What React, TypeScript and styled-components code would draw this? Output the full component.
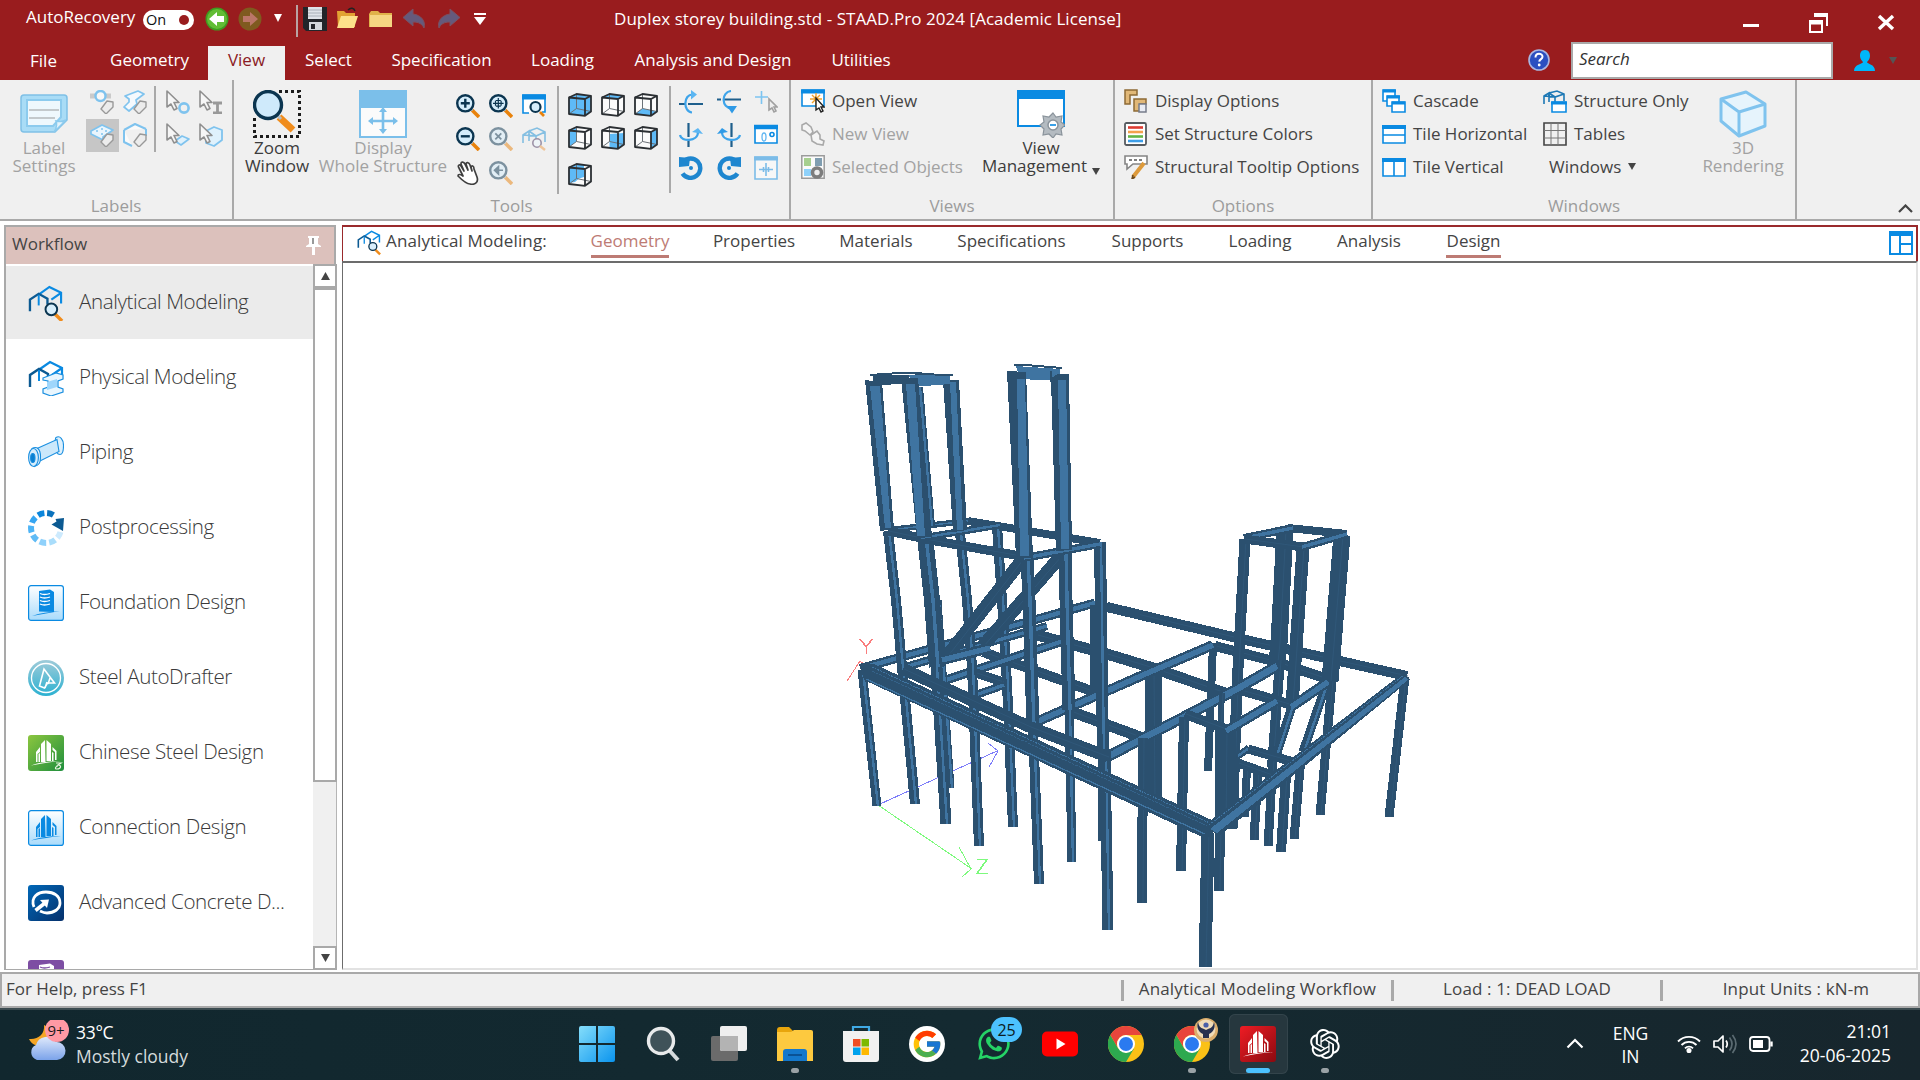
import React from "react";
import styled, { createGlobalStyle, css } from "styled-components";
import { FcGoogle } from "react-icons/fc";
import { FaWhatsapp } from "react-icons/fa";
import { RiOpenaiFill } from "react-icons/ri";

const Global = createGlobalStyle`
  * { box-sizing: border-box; }
  body { margin: 0; background: #fff; overflow: hidden; }
`;

const RED = "#991c1e";
const LINE = "#a9a9a9";
const BLUE = "#0a8ae2";
const NAVY = "#0b3550";

const Screen = styled.div`
  width: 1920px;
  height: 1080px;
  display: flex;
  flex-direction: column;
  overflow: hidden;
  background: #fff;
  color: #444;
  font: 400 17px/18px "Open Sans", "Noto Sans", sans-serif;
  letter-spacing: -0.01px;
  white-space: nowrap;
`;

const Svg = styled.svg<{ $w?: number; $h?: number; $dim?: boolean }>`
  display: block;
  flex: none;
  width: ${(p) => p.$w ?? 24}px;
  height: ${(p) => p.$h ?? p.$w ?? 24}px;
  opacity: ${(p) => (p.$dim ? 0.5 : 1)};
`;

/* ---------- title bar ---------- */
const TitleBar = styled.header`
  height: 46px;
  flex: none;
  display: flex;
  align-items: flex-start;
  background: ${RED};
  color: #fff;
  padding-left: 26px;
`;
const TitleText = styled.span<{ $w: number; $ls?: number; $mt?: number }>`
  width: ${(p) => p.$w}px;
  flex: none;
  margin-top: ${(p) => p.$mt ?? 8}px;
  letter-spacing: ${(p) => p.$ls ?? 0}px;
`;
const Toggle = styled.span`
  width: 51px;
  height: 20px;
  flex: none;
  margin: 10px 11px 0 8px;
  padding: 0 5px 0 3px;
  border-radius: 10px;
  background: #fff;
  color: #111;
  display: flex;
  align-items: center;
  justify-content: space-between;
  font-size: 14.5px;
  &::after {
    content: "";
    width: 10px;
    height: 10px;
    border-radius: 50%;
    background: ${RED};
  }
`;
const QuickAccess = styled.div`
  display: flex;
  flex: none;
  width: 409px;
  padding-top: 7px;
`;
const Slot = styled.span<{ $w: number }>`
  width: ${(p) => p.$w}px;
  flex: none;
`;
const QuickDivider = styled.span`
  width: 2px;
  height: 32px;
  margin: -2px 5px 0 0;
  background: #b9a3a3;
`;
const WindowButtons = styled.div`
  margin-left: auto;
  padding: 11px 25px 0 0;
  display: flex;
  gap: 49px;
`;

/* ---------- menu row ---------- */
const MenuRow = styled.nav`
  height: 34px;
  flex: none;
  display: flex;
  background: ${RED};
  color: #fff;
`;
const MenuTab = styled.span<{ $w: number; $active?: boolean; $drop?: number; $pr?: number }>`
  width: ${(p) => p.$w}px;
  text-align: center;
  padding-top: ${(p) => 5 + (p.$drop ?? 0)}px;
  padding-right: ${(p) => p.$pr ?? 0}px;
  ${(p) => p.$active && css`background: #f0f0f0; color: #8a1a24;`}
`;
const MenuRight = styled.div`
  margin-left: auto;
  display: flex;
  align-items: flex-start;
  padding-right: 23px;
`;
const SearchBox = styled.div`
  width: 262px;
  height: 37px;
  margin: -4px 21px 0 21px;
  padding: 6px 6px;
  border: 2px solid ${LINE};
  background: #fff;
  color: #333;
  font-style: italic;
`;
const Down = styled.span<{ $size?: number; $color?: string; $mt?: number; $ml?: number }>`
  display: block;
  width: 0;
  flex: none;
  border: ${(p) => (p.$size ?? 8) / 2}px solid transparent;
  border-top: ${(p) => (p.$size ?? 8) - 1}px solid ${(p) => p.$color ?? "#444"};
  border-bottom: 0;
  margin-top: ${(p) => p.$mt ?? 0}px;
  margin-left: ${(p) => p.$ml ?? 0}px;
`;

/* ---------- ribbon ---------- */
const Ribbon = styled.section`
  height: 141px;
  flex: none;
  display: flex;
  background: #f0f0f0;
  border-bottom: 2px solid ${LINE};
`;
const Group = styled.div<{ $w: number }>`
  width: ${(p) => p.$w}px;
  height: 139px;
  flex: none;
  border-right: 2px solid ${LINE};
  display: flex;
  flex-direction: column;
`;
const GroupBody = styled.div`
  height: 117px;
  display: flex;
  align-items: flex-start;
`;
const GroupName = styled.div`
  text-align: center;
  color: #9c9c9c;
`;
const BigButton = styled.div<{ $w: number; $off?: boolean; $pl?: number }>`
  width: ${(p) => p.$w}px;
  flex: none;
  padding: 10px 0 0 ${(p) => p.$pl ?? 0}px;
  display: flex;
  flex-direction: column;
  align-items: center;
  text-align: center;
  color: ${(p) => (p.$off ? "#a2a2a2" : "#3c3c3c")};
  & > svg { margin-bottom: 1px; }
`;
const WithArrow = styled.span`
  display: flex;
  gap: 5px;
`;
const IconGrid = styled.div<{ $cell?: number; $cols: number; $rows: string; $pt: number; $ml?: number }>`
  display: grid;
  grid-template-columns: repeat(${(p) => p.$cols}, ${(p) => p.$cell ?? 33}px);
  grid-template-rows: ${(p) => p.$rows};
  padding-top: ${(p) => p.$pt}px;
  margin-left: ${(p) => p.$ml ?? 0}px;
`;
const IconCell = styled.span<{ $on?: boolean }>`
  height: 33px;
  display: flex;
  align-items: flex-start;
  padding: 4px 0 0 4px;
  background: ${(p) => (p.$on ? "#c6c6c6" : "transparent")};
`;
const InnerLine = styled.span<{ $h: number; $ml: number; $mr: number }>`
  width: 2px;
  flex: none;
  height: ${(p) => p.$h}px;
  margin: 6px ${(p) => p.$mr}px 0 ${(p) => p.$ml}px;
  background: ${LINE};
`;
const CommandList = styled.div<{ $w: number; $pl: number }>`
  width: ${(p) => p.$w}px;
  flex: none;
  padding: 4px 0 0 ${(p) => p.$pl}px;
`;
const Command = styled.div<{ $off?: boolean; $bare?: boolean }>`
  height: 33px;
  display: flex;
  align-items: center;
  gap: 7px;
  padding-left: ${(p) => (p.$bare ? 6 : 0)}px;
  color: ${(p) => (p.$off ? "#a2a2a2" : "#444")};
`;
const Collapse = styled.div`
  flex: 1;
  display: flex;
  align-items: flex-end;
  justify-content: flex-end;
  padding: 0 7px 6px 0;
`;

/* ---------- workspace ---------- */
const Workspace = styled.main`
  height: 751px;
  flex: none;
  display: flex;
  padding: 4px 2px 2px 4px;
`;
const Panel = styled.aside`
  width: 333px;
  height: 745px;
  flex: none;
  display: flex;
  flex-direction: column;
`;
const PanelHead = styled.div`
  width: 332px;
  height: 39px;
  flex: none;
  border: 2px solid ${LINE};
  border-bottom: 0;
  background: #dcc1bc;
  display: flex;
  justify-content: space-between;
  padding: 8px 13px 0 6px;
`;
const PanelBody = styled.div`
  flex: 1;
  min-height: 0;
  display: flex;
  border-left: 2px solid ${LINE};
  border-bottom: 1px solid ${LINE};
`;
const FlowList = styled.div`
  width: 307px;
  padding-top: 2px;
  overflow: hidden;
`;
const FlowItem = styled.div<{ $on?: boolean }>`
  height: 73px;
  margin-bottom: 2px;
  padding-left: 22px;
  display: flex;
  align-items: center;
  gap: 15px;
  background: ${(p) => (p.$on ? "#ebebeb" : "transparent")};
`;
const FlowName = styled.span`
  padding-bottom: 4px;
  font-size: 20.6px;
  font-weight: 300;
  line-height: 28px;
  letter-spacing: -0.42px;
  color: #3a3a3a;
`;
const Scroll = styled.div`
  width: 24px;
  display: flex;
  flex-direction: column;
  background: #f0f0f0;
  border-right: 1px solid #b5b5b5;
`;
const ScrollEnd = styled.div<{ $last?: boolean }>`
  width: 24px;
  height: 24px;
  flex: none;
  margin-bottom: ${(p) => (p.$last ? -1 : 0)}px;
  border: 2px solid ${LINE};
  background: #fff;
  display: flex;
  align-items: center;
  justify-content: center;
`;
const Thumb = styled.div`
  width: 24px;
  height: 494px;
  border: 2px solid ${LINE};
  background: #fff;
  margin-bottom: auto;
`;
const View = styled.section`
  width: 1576px;
  margin-left: 5px;
  display: flex;
  flex-direction: column;
`;
const ViewTabs = styled.div`
  height: 36px;
  flex: none;
  border: 2px solid #9a2a2c;
  border-left-width: 1px;
  border-bottom: 0;
  display: flex;
  align-items: flex-start;
  padding-left: 14px;
`;
const ViewTitle = styled.span`
  width: 205px;
  padding-top: 5px;
  margin-left: 5px;
  letter-spacing: 0.13px;
`;
const ViewTab = styled.span<{ $w: number; $gap: number; $on?: boolean; $line?: boolean }>`
  width: ${(p) => p.$w}px;
  margin-right: ${(p) => p.$gap}px;
  height: 31px;
  padding-top: 5px;
  display: flex;
  justify-content: center;
  flex: none;
  color: ${(p) => (p.$on ? "#bd7b74" : "#444")};
  border-bottom: 3px solid ${(p) => (p.$line ? "#bd7b74" : "transparent")};
`;
const LayoutIcon = styled.span`
  margin: 4px 3px 0 auto;
`;
const Stage = styled.div`
  flex: 1;
  border: 2px solid #e2e2e2;
  border-top: 2px solid #6c6c6c;
  border-left: 1px solid #6c6c6c;
  background: #fff;
  overflow: hidden;
`;

/* ---------- status bar ---------- */
const Status = styled.footer`
  height: 36px;
  flex: none;
  border: 2px solid ${LINE};
  background: #f0f0f0;
  display: flex;
  align-items: flex-start;
  padding: 6px 0 0 4px;
`;
const StatusText = styled.span<{ $w: number }>`
  width: ${(p) => p.$w}px;
  flex: none;
  text-align: center;
  letter-spacing: 0.14px;
`;
const StatusHelp = styled.span`
  width: 1115px;
  flex: none;
`;
const StatusLine = styled.i`
  width: 3px;
  height: 21px;
  flex: none;
  background: ${LINE};
`;

/* ---------- taskbar ---------- */
const Taskbar = styled.footer`
  height: 72px;
  flex: none;
  border-top: 2px solid #3b4b50;
  background: linear-gradient(90deg, #11272e, #142a31 50%, #17262d);
  display: flex;
  color: #fff;
  font-size: 17.5px;
`;
const Weather = styled.div`
  width: 567px;
  flex: none;
  display: flex;
  padding: 10px 0 0 27px;
`;
const WeatherText = styled.div`
  line-height: 24px;
  margin-left: 7px;
  color: #d5dbdc;
  & > b { display: block; font-weight: 400; color: #fff; letter-spacing: -0.3px; }
`;
const Apps = styled.div`
  display: flex;
  flex: none;
  padding-top: 4px;
`;
const TaskApp = styled.div<{ $on?: boolean }>`
  position: relative;
  width: 59px;
  height: 60px;
  margin-right: 7.2px;
  border-radius: 6px;
  display: flex;
  justify-content: center;
  padding-top: 12px;
  ${(p) => p.$on && css`background: #26373e; box-shadow: inset 0 0 0 1px #33444b;`}
  & > svg { width: 36px; height: 36px; }
`;
const Dot = styled.i<{ $on?: boolean }>`
  position: absolute;
  bottom: 1px;
  width: ${(p) => (p.$on ? 24 : 8)}px;
  height: 5px;
  border-radius: 3px;
  background: ${(p) => (p.$on ? "#4cc2ff" : "#9aa2a6")};
`;
const Badge = styled.span`
  position: absolute;
  top: 3px;
  left: 27px;
  width: 31px;
  height: 25px;
  border-radius: 13px;
  background: #4cc2ff;
  color: #0d1c22;
  font-size: 16px;
  line-height: 26px;
  text-align: center;
`;
const White = styled.span`
  width: 36px;
  height: 36px;
  border-radius: 50%;
  background: #fff;
  display: flex;
  align-items: center;
  justify-content: center;
  & > svg { width: 32px; height: 32px; }
`;
const Avatar = styled.span`
  position: absolute;
  top: 4px;
  left: 31px;
`;
const Tray = styled.div`
  margin-left: auto;
  display: flex;
  padding-right: 29px;
`;
const TrayText = styled.div<{ $w: number; $right?: boolean; $pt: number; $lh: number }>`
  width: ${(p) => p.$w}px;
  padding-top: ${(p) => p.$pt}px;
  text-align: ${(p) => (p.$right ? "right" : "center")};
  line-height: ${(p) => p.$lh}px;
`;
const TrayIcons = styled.div`
  display: flex;
  gap: 12px;
  padding-top: 22px;
  width: 108px;
`;

/* ---------- icons ---------- */
type Lens = { sign?: "plus" | "minus" | "cross" | "move" | "left"; dim?: boolean };
const Magnifier = ({ sign, dim }: Lens) => (
  <Svg viewBox="0 0 24 24" $dim={dim} fill="none">
    <path d="M16 16l7 7" stroke="#e8820c" strokeWidth="3.6" />
    <path d="M14.5 14.5l2 2" stroke="#b9c4cc" strokeWidth="2.4" />
    <circle cx="9.3" cy="9.3" r="8.1" fill="#d5edfb" stroke={NAVY} strokeWidth="2.4" />
    <g stroke={NAVY} strokeWidth="2.4">
      {sign === "plus" && <path d="M4.8 9.3h9M9.3 4.8v9" />}
      {sign === "minus" && <path d="M4.8 9.3h9" />}
      {sign === "cross" && <path d="M6.3 6.3l6 6M12.3 6.3l-6 6" strokeWidth="1.8" />}
      {sign === "left" && <path d="M14 9.3H9M9.500 5.500L5.500 9.300l4 3.800z" fill={NAVY} strokeWidth="1.6" />}
      {sign === "move" && <path d="M4 9.3h10.6M9.3 4v10.6M6.5 6.8v5M12.1 6.8v5M6.8 6.5h5M6.8 12.1h5" strokeWidth="1.2" />}
    </g>
  </Svg>
);

const P = {
  tlf: [1, 4.5], trf: [17, 6], blf: [1, 21], brf: [17, 22.8],
  tlb: [8.5, 1], trb: [23, 2.8], blb: [8.5, 15.5], brb: [23, 18.5],
} as const;
type V = keyof typeof P;
const poly = (vs: V[]) => vs.map((v) => P[v].join(",")).join(" ");
const cubeFaces: V[][][] = [
  [["tlf", "tlb", "trb", "brb", "brf", "blf"]],
  [["tlf", "tlb", "trb", "trf"]],
  [["blf", "blb", "brb", "brf"]],
  [["tlf", "tlb", "blb", "blf"]],
  [],
  [["trf", "trb", "brb", "brf"]],
  [],
];
const Cube = ({ index }: { index: number }) => (
  <Svg viewBox="0 0 24 24" fill="none" strokeLinejoin="round">
    <polygon points={poly(["tlf", "tlb", "trb", "brb", "brf", "blf"])} fill="#fbfbfb" />
    {cubeFaces[index].map((f, i) => <polygon key={i} points={poly(f)} fill="#5ebaf7" />)}
    {index === 4 && <polygon points="8.500,8 23,7 23,18.500 17,22.800 8.500,21.800" fill="#5ebaf7" />}
    {index === 6 && <polygon points="1,4.500 8.500,1 16,2 16,14 11,15.500 7,19 1,20" fill="#5ebaf7" />}
    <path d="M8.500 1V15.500L23 18.500M8.500 15.500L1 21" stroke="#6b7177" strokeWidth="1" />
    <path d="M1 4.500L17 6V22.800L1 21zM1 4.500L8.500 1 23 2.800 17 6M23 2.800V18.500L17 22.800" stroke="#2b2f33" strokeWidth="1.8" />
  </Svg>
);

const Tag = () => <path d="M11 19l6-8 6 1v5l-7 7z" fill="#ececec" stroke="#999" strokeWidth="1.4" />;
type Part = "node" | "beam" | "plate" | "solid";
const LabelIcon = ({ kind }: { kind: Part }) => (
  <Svg viewBox="0 0 24 24" fill="none" stroke="#7fc3ee" strokeWidth="1.7" strokeLinejoin="round">
    {kind === "node" && <><path d="M0 6h21" stroke="#cacaca" strokeWidth="5" /><circle cx="10.5" cy="6" r="5" fill="#f8f8f8" strokeWidth="2.4" /></>}
    {kind === "beam" && <path d="M2 6L15 1l6 3-8 6 1 4-8 7-5-4 5-5V9z" fill="#f4f9fd" />}
    {kind === "plate" && <><path d="M1 8L12 2l11 5-10 7v3L1 11z" fill="#e9f5fd" /><path d="M6 8h2M11 6h2M15 8h2M11 11h2" /></>}
    {kind === "solid" && <path d="M1 7L12 1l11 5M1 7v12l8 4M23 6v7" fill="#fafafa" strokeWidth="2" />}
    <Tag />
  </Svg>
);
const Pointer = ({ kind }: { kind: Part }) => (
  <Svg viewBox="0 0 24 24" fill="none" strokeLinejoin="round">
    {kind === "node" && <circle cx="18" cy="18" r="4.6" stroke="#7fc3ee" strokeWidth="2.6" />}
    {kind === "beam" && <path d="M14 13h9M14 23h9M18.500 13v10" stroke="#999" strokeWidth="2.8" />}
    {kind === "plate" && <path d="M9 18l7-5 7 3-8 6z" stroke="#7fc3ee" fill="#dff1fc" strokeWidth="1.6" />}
    {kind === "solid" && <path d="M7 8l8-4 8 3v10l-8 6-8-3z" stroke="#7fc3ee" fill="#dff1fc" strokeWidth="1.8" />}
    <path d="M1 1v16l4-3 3 6 3-1.500-3-6h5z" fill="#f6f6f6" stroke="#8f8f8f" strokeWidth="1.6" />
  </Svg>
);

const Spin = ({ kind }: { kind: number }) => (
  <Svg viewBox="0 0 24 24" fill="none" stroke="#3ea4ea" strokeWidth="2.2">
    {kind === 0 && <><path d="M0 14h6M9 14h15" stroke="#1f5f8c" /><path d="M14 4.500C4 4 4 22 13 22.500" /><path d="M12 0l6 4.500-6 5z" fill="#5cb6f2" stroke="none" /></>}
    {kind === 1 && <><path d="M0 9.500h4M7 9.500h17" stroke="#1f5f8c" /><path d="M14 1C4 2 4 18 15 18.500" /><path d="M10 16h10l-5 7.500z" fill="#2f9ae6" stroke="none" /></>}
    {kind === 2 && <><path d="M9.500 0v14M9.500 18v6" stroke="#1f5f8c" /><path d="M1 12c1 7 18 7 18-3" /><path d="M13 9l6-4 5 6z" fill="#5cb6f2" stroke="none" /></>}
    {kind === 3 && <><path d="M14.500 0v14M14.500 18v6" stroke="#1f5f8c" /><path d="M23 12c-1 7-18 7-18-3" /><path d="M11 9L5 5 0 11z" fill="#2f9ae6" stroke="none" /></>}
    {(kind === 4 || kind === 5) && (
      <g transform={kind === 5 ? "matrix(-1 0 0 1 24 0)" : undefined}>
        <path d="M4.500 5.500a9.700 9.700 0 1 1-1 12" stroke="#1e86cf" strokeWidth="4.4" />
        <path d="M0 1l11 1-1 8-10 1z" fill="#1e86cf" stroke="none" />
        <circle cx="12" cy="12" r="2" fill="#1e86cf" stroke="none" />
      </g>
    )}
  </Svg>
);

const Win = ({ kind }: { kind: string }) => (
  <Svg viewBox="0 0 24 24" fill="none" stroke={BLUE} strokeWidth="1.6">
    {kind === "cascade" && <g fill="#fff"><path d="M1 1h12v11H1z" /><path d="M1 2h13" strokeWidth="3" /><path d="M5 7h12v10H5z" /><path d="M5 8h13" strokeWidth="3" /><path d="M10 13h13v10H10z" /><path d="M10 14h13" strokeWidth="3" /></g>}
    {kind === "horiz" && <><path d="M1 4h22v17H1zM1 13h22" fill="#fff" /><path d="M0 5h24" strokeWidth="4" /></>}
    {kind === "vert" && <><path d="M1 4h22v17H1zM12 4v17" fill="#fff" /><path d="M0 5h24" strokeWidth="4" /></>}
    {kind === "structure" && <><path d="M1 15V7l5-3v9M6 4l8-2 7 3v7M6 4l6 4 9-3M12 8v5M1 7l11 1" stroke="#1d78b5" /><path d="M9 13h14v10H9z" fill="#fff" /><path d="M8 14h16" strokeWidth="3" /></>}
    {kind === "tables" && <><path d="M1 1h22v22H1z" stroke="#444" /><path d="M1 8.500h22M1 16h22M8 1v22M15 1v22" stroke="#777" strokeWidth="1" /></>}
    {kind === "open" && <><path d="M1 1h22v16H1z" fill="#fff" /><path d="M0 2.500h24" strokeWidth="4" /><path d="M15 4v12M9 10h12M11 6l8 8M19 6l-8 8" stroke="#f0a22c" strokeWidth="1.4" /><path d="M15 9v12l3-2 2 4 2-1-2-4h3z" fill="#fff" stroke="#222" strokeWidth="1.400" /></>}
    {kind === "new" && <g stroke="#a9a9a9" fill="#f5f5f5"><path d="M1 3l4-2 5 4 2 5-3 3-5-4-3-1z" /><path d="M10 13l6-4 3 4v4l4 2-1 4-6-1-5-3z" /></g>}
    {kind === "selected" && <g stroke="none"><path d="M.8.8h22.400v22.400H.8z" fill="#fafafa" stroke="#9b9b9b" strokeWidth="1.500" /><path d="M3 3h7v8H3z" fill="#a6cf8f" /><path d="M14 3h7v8h-7z" fill="#7f9db0" /><path d="M3 14h7v7H3z" fill="#8ed1fa" /><circle cx="16" cy="17.500" r="4.500" stroke="#7d7d7d" strokeWidth="3.600" fill="#eee" /></g>}
    {kind === "display" && <g stroke="#8d6a35" strokeWidth="1.500"><path d="M1 1h12v5H6v9H1z" fill="#e1b878" /><path d="M10 10h12v5h-6v7h-6z" fill="#e1b878" /><path d="M15 15h7v8h-7z" fill="#e9ecf4" stroke="#777c8a" /></g>}
    {kind === "colors" && <g><rect x="1" y="1" width="21" height="22" rx="1.500" fill="#fff" stroke="#565b60" strokeWidth="1.800" /><path d="M4 5.500h15" stroke="#dc3b32" strokeWidth="2.600" /><path d="M4 10h15" stroke="#f3a14c" strokeWidth="2.600" /><path d="M4 14.500h15" stroke="#62b545" strokeWidth="2.600" /><path d="M4 19h15" stroke="#3d9ee8" strokeWidth="2.600" /></g>}
    {kind === "tooltip" && <><path d="M1 1h22v8H9l-6 5V9H1z" fill="#fff" stroke="#858585" /><path d="M5 5h14" stroke="#555" strokeDasharray="3 2" /><path d="M20 8L9 22" stroke="#dd9a3b" strokeWidth="4" /><path d="M9 20l-1 4 3-2" stroke="#6e4a1c" /></>}
    {kind === "zoomwin" && <><path d="M7 19H1V1h22v17h-3" fill="#fff" /><path d="M0 3h24" strokeWidth="5" /><circle cx="13.500" cy="13" r="5" stroke={NAVY} strokeWidth="2.200" fill="#d5edfb" /><path d="M18 18l4 4" stroke="#e8820c" strokeWidth="2.600" /></>}
    {kind === "angle" && <><path d="M1 3h22v17H1z" fill="#fff" /><path d="M0 4h24" strokeWidth="4.500" /><ellipse cx="10" cy="14" rx="2" ry="4" stroke="#62b7f2" strokeWidth="1.300" /><circle cx="18" cy="11.500" r="2" /></>}
    {kind === "pan" && <g opacity=".5"><path d="M1 1h22v22H1z" fill="#fff" /><path d="M0 2.500h24" strokeWidth="4" /><path d="M5 13.500h14M12 7v13M9.500 11v5M14.500 11v5" /></g>}
    {kind === "pick" && <><path d="M1 7h13M7.500 1v13" stroke="#7cc4f1" /><path d="M15 9v11l3-2 2 4 2-1-2-4h3z" fill="#eee" stroke="#a0a0a0" /></>}
    {kind === "frames" && <g opacity=".6"><path d="M1 16V8l6-4v10M7 4l8-3 8 4v10M7 4l7 5 9-4M1 8l13 1v7" stroke="#3d9fd9" /><circle cx="15" cy="16" r="4.200" stroke="#657" fill="#eef7fc" /><path d="M18 19l5 4" stroke="#efa860" strokeWidth="2.500" /></g>}
    {kind === "layout" && <g strokeWidth="2"><path d="M1 1h22v22H1zM11 5v18M11 13h12" fill="#fff" /><path d="M0 3h24" strokeWidth="4" /></g>}
  </Svg>
);

const Hand = () => (
  <Svg viewBox="0 0 24 24" fill="#fff" stroke="#3f3f3f" strokeWidth="1.700" strokeLinejoin="round">
    <path d="M3 7C1 4 4 3 5 5l3 5L5 3c0-3 3-2 4 0l3 6-2-6c0-2 3-2 4 1l2 6-1-4c1-2 3-1 3 2l3 8c2 6-3 8-7 7-4 0-9-5-12-8 0-2 2-2 5 0z" />
  </Svg>
);

const Frame = () => (
  <>
    <path d="M12 9L22 2l12 6v11M34 8L24 15" stroke={BLUE} strokeWidth="2.200" />
    <path d="M2 27V15l9-6 9 5v6" stroke="#0c5a92" strokeWidth="2.400" />
    <path d="M11 10v11" stroke={BLUE} strokeWidth="2" />
  </>
);
const Modeling = ({ w }: { w: number }) => (
  <Svg $w={w} viewBox="0 0 37 37" fill="none">
    <Frame />
    <path d="M28 30l7 7" stroke="#f08c1c" strokeWidth="3.600" />
    <circle cx="24" cy="25" r="6" fill="#d8eefb" stroke={NAVY} strokeWidth="2" />
  </Svg>
);
const Tower = ({ color }: { color: string }) => (
  <g fill={color}>
    <path d="M17 5l-4 4v18h4.500zM18.500 5l4.500 4v17h-4.500z" />
    <path d="M12 12l-4 5v10h1.500v-8L12 17zM24.500 12l4 4v9H27v-8l-2.500-2z" />
    <path d="M10.500 19v8H12v-9zM24 17v9h1.500v-8z" />
    <path d="M3 30.500c10-3.500 19-4.500 30-4.500-10 1-19 2.500-30 4.500z" />
  </g>
);
const FlowIcon = ({ kind }: { kind: string }) => {
  if (kind === "analytical") return <Modeling w={36} />;
  return (
    <Svg $w={36} viewBox="0 0 36 36" fill="none">
      <defs>
        <linearGradient id="pale" x1="0" y1="0" x2="0" y2="1"><stop stopColor="#fff" /><stop offset="1" stopColor="#a9dbfb" /></linearGradient>
        <linearGradient id="green" x1="0" y1="0" x2="1" y2="1"><stop stopColor="#8cc63f" /><stop offset="1" stopColor="#1f8f3d" /></linearGradient>
        <linearGradient id="deep" x1="0" y1="0" x2="1" y2="1"><stop stopColor="#0068b8" /><stop offset="1" stopColor="#06306b" /></linearGradient>
        <linearGradient id="teal" x1="0" y1="0" x2="0" y2="1"><stop stopColor="#9fcbd9" /><stop offset="1" stopColor="#2bb1d1" /></linearGradient>
      </defs>
      {kind === "physical" && <><Frame /><path d="M15 18l13-5 7 2v4l-5 2v6l5 2v3l-12 4-8-3v-4l5-2v-6l-5-1z" fill="#e9f6fe" stroke="#1a8fe0" strokeWidth="1.200" /><path d="M19 22l10-3v8l-10 3z" fill="#9fd6fb" /></>}
      {kind === "piping" && <g stroke="#1a8fe0" strokeWidth="1.100"><path d="M28 2.500c4-2.500 7.500 2 7.500 8s-1 9-3.500 9-5-3-5-9 0-7 1-8z" fill="#ddf0fc" /><path d="M9 13.500l20-9 2 12-19 9.500z" fill="#cbe8fb" /><path d="M4 13.500c5-3 8.500 1 8.500 8s-1.500 8.500-6 10z" fill="#eaf6fe" /><ellipse cx="5.500" cy="22.500" rx="4.900" ry="9" fill="#d6edfc" /><ellipse cx="4.800" cy="23" rx="2.200" ry="4.500" fill="#0b7fd0" /></g>}
      {kind === "post" && <>
        <g strokeWidth="6">
          {["#0b86dc", "#0a72bd"].map((c, i) => <path key={c} d="M14.700 3.400a15 15 0 0 1 6.600 0" transform={`rotate(${i * 36 - 19} 18 18)`} stroke={c} />)}
          {["#cdeafd", "#a9ddfb", "#8fd1fb", "#60bbf5", "#4db4f6", "#35a5f2"].map((c, i) => <path key={i} d="M14.700 3.400a15 15 0 0 1 6.600 0" transform={`rotate(${i * 37 + 118} 18 18)`} stroke={c} />)}
        </g>
        <path d="M23.500 14.500l5-3-1-2.500L36 8l-1 13z" fill="#0c5a92" />
      </>}
      {(kind === "foundation" || kind === "connection") && <rect x=".6" y=".6" width="34.800" height="34.800" rx="2.500" fill="url(#pale)" stroke={BLUE} strokeWidth="1.200" />}
      {kind === "foundation" && <><path d="M11 6l11-1.500L26 7v20l-15-.5zM4 31c8-3 17-4 28-5-9 2-19 3-28 5z" fill={BLUE} /><path d="M12 8.500c4 2 7 1 10 0M12 12c4 2 7 1 10 0M12 15.500c4 2 7 1 10 0M12 19c4 2 7 1 10 0" stroke="#fff" strokeWidth="1.300" /></>}
      {kind === "connection" && <Tower color={BLUE} />}
      {kind === "steel" && <><circle cx="18" cy="18" r="18" fill="url(#teal)" /><circle cx="18" cy="18" r="14.500" stroke="#fff" strokeWidth="1.300" /><path d="M16 9L11.500 26l5 2 3-5 7 0zM17 28l2-6M22 18l-2 6" stroke="#fff" strokeWidth="1.600" /></>}
      {kind === "chinese" && <><rect width="36" height="36" rx="3" fill="url(#green)" /><Tower color="#fff" /><path d="M28 28h5l-3 2c4 0 3 4-1 4-3 0-1-3 1-3" stroke="#e8f5e0" strokeWidth="1.200" /></>}
      {kind === "concrete" && <><rect width="36" height="36" rx="3" fill="url(#deep)" /><path d="M6 22C2 12 10 7 18 7c8 0 14 4 14 11 0 6-6 10-13 10-3 0-5-1-7-2" stroke="#fff" strokeWidth="2.800" /><path d="M7.500 25.500L17 18" stroke="#fff" strokeWidth="3.600" /><path d="M12 15l9-.5-2 8.500z" fill="#fff" /></>}
      {kind === "advanced" && <><rect width="36" height="36" rx="3" fill="#7d4ea3" /><path d="M11 5l11-1.500L26 6v20H11z" fill="#fff" /><path d="M12 7c4 2 7 1 10 0M12 10.500c4 2 7 1 10 0" stroke="#7d4ea3" strokeWidth="1.300" /></>}
    </Svg>
  );
};

/* ---------- structural model ---------- */
const DARK = "#2b506f";
const LIGHT = "#3f74a1";
type Look = "d" | "l" | "c" | "s";
type Member = [Look, number, ...number[]];
// look: d = shaded face, l = lit face, c = column with lit web, s = shaded with fine streaks; then width and points
const members: Member[] = [
  ["s", 10, 1107, 607, 1250, 641, 1407, 676],
  ["l", 9, 862, 668, 1095, 603],
  ["d", 9, 1100, 606, 1140, 615],
  ["d", 8, 968, 521, 1100, 543],
  ["l", 6, 888, 530, 968, 521],
  ["c", 8, 919, 387, 931, 526],
  ["c", 10, 997, 526, 1002, 600, 1007, 684, 1013, 827],
  ["l", 8, 905, 667, 1047, 626],
  ["s", 11, 1037, 635, 1107, 654, 1153, 668, 1225, 693],
  ["s", 10, 983, 652, 1100, 694],
  ["l", 9, 943, 681, 1063, 641],
  ["s", 9, 970, 671, 1003, 682],
  ["l", 8, 973, 696, 1004, 685],
  ["s", 10, 1215, 646, 1277, 662, 1330, 680],
  ["d", 8, 1213, 643, 1208, 771],
  ["s", 17, 1153, 670, 1154, 800],
  ["l", 10, 1036, 722, 1107, 691, 1150, 672, 1213, 645],
  ["s", 11, 1070, 711, 1140, 737],
  ["c", 7, 938, 600, 951, 788],
  ["d", 14, 1097, 605, 1097, 692],
  ["s", 5, 1100, 757, 1101, 841],
  ["s", 9, 1332, 681, 1320, 815],
  ["s", 9, 1405, 677, 1389, 817],
  ["s", 17, 1285, 529, 1279, 643, 1277, 662],
  ["s", 10, 1280, 660, 1272, 767],
  ["s", 17, 1342, 535, 1330, 681],
  ["d", 8, 1288, 528, 1347, 534],
  ["l", 8, 1244, 538, 1293, 528],
  ["s", 11, 1245, 539, 1237, 687, 1232, 829],
  ["s", 13, 1303, 548, 1292, 705],
  ["s", 9, 1244, 539, 1303, 547],
  ["l", 8, 1302, 547, 1347, 534],
  ["c", 9, 1292, 706, 1276, 756],
  ["c", 9, 1327, 682, 1303, 752],
  ["s", 10, 1237, 689, 1292, 705],
  ["l", 11, 1107, 757, 1180, 719, 1237, 689, 1277, 666],
  ["s", 6, 1222, 693, 1220, 735],
  ["s", 21, 1226, 729, 1225, 829],
  ["s", 10, 1220, 826, 1219, 891],
  ["s", 10, 1184, 717, 1181, 871],
  ["s", 10, 1143, 738, 1142, 903],
  ["s", 10, 1185, 714, 1228, 730],
  ["l", 10, 1226, 731, 1277, 701],
  ["l", 10, 1291, 707, 1328, 682],
  ["s", 8, 1247, 765, 1245, 817],
  ["s", 9, 1258, 770, 1254, 840],
  ["s", 9, 1273, 760, 1268, 846],
  ["s", 10, 1286, 775, 1281, 852],
  ["s", 9, 1301, 757, 1294, 839],
  ["l", 7, 1238, 756, 1249, 748],
  ["s", 9, 1248, 749, 1297, 763],
  ["s", 9, 1238, 763, 1280, 778],
  ["c", 10, 888, 531, 896, 600, 902, 667, 915, 804],
  ["c", 16, 925, 537, 932, 600, 937, 667],
  ["c", 11, 936, 667, 946, 824],
  ["c", 10, 960, 533, 967, 600, 972, 667, 979, 846],
  ["s", 13, 1022, 560, 944, 660],
  ["s", 13, 1060, 557, 983, 646],
  ["l", 10, 942, 660, 990, 648],
  ["c", 13, 1027, 557, 1029, 600, 1033, 727],
  ["c", 10, 1033, 727, 1039, 884],
  ["c", 13, 1065, 550, 1066, 600, 1069, 710],
  ["c", 9, 1069, 710, 1072, 862],
  ["c", 12, 1100, 542, 1103, 755],
  ["c", 11, 1105, 750, 1108, 930],
  ["s", 9, 888, 531, 930, 540, 1026, 557],
  ["l", 7, 921, 538, 1000, 525],
  ["l", 8, 1024, 558, 1100, 544],
  ["s", 12, 903, 669, 1030, 727, 1108, 757],
  ["c", 9, 862, 670, 877, 806],
  ["s", 13, 1208, 833, 1205, 968],
];

const shift = (pts: number[], d: number) =>
  pts.map((v, i) => (i % 2 ? v : v + d)).join(" ");

const MemberShape = ({ m }: { m: Member }) => {
  const [look, w, ...pts] = m;
  return (
    <g fill="none" strokeLinejoin="bevel">
      <polyline points={shift(pts, 0)} stroke={DARK} strokeWidth={w} />
      {look === "l" && <polyline points={shift(pts, 0)} stroke={LIGHT} strokeWidth={w - 4.6} />}
      {look === "c" && <polyline points={shift(pts, 1)} stroke={LIGHT} strokeWidth={w > 12 ? 3.4 : 2.4} />}
      {look === "s" && <polyline points={shift(pts, 1)} stroke="#31597b" strokeWidth={0.8} />}
    </g>
  );
};

const Shaft = ({ o, l }: { o: string; l: string }) => (
  <>
    <polygon points={o} fill={DARK} />
    <polygon points={l} fill={LIGHT} />
  </>
);

const Model = () => (
  <Svg $w={1573} $h={704} viewBox="343 263 1573 704" shapeRendering="crispEdges">
    <g fill="none" strokeWidth="1">
      <path d="M880 804L998 750.500M988 743l10 8-9 16M1014 748h5" stroke="#7d7dfa" />
      <path d="M878 805l94 64M959 847l12 22-9 8" stroke="#7dfa7d" />
      <path d="M847 681l13-20 4 3" stroke="#fa7d7d" />
      <path d="M860 639l6.500 8v6.500M872.500 639l-6.500 8" stroke="#fa7d7d" strokeWidth="1.600" />
      <path d="M977 859.500h10l-10 14h10.500" stroke="#7dfa7d" strokeWidth="1.600" />
    </g>
    {members.map((m, i) => <MemberShape key={i} m={m} />)}
    <g fill="none">
      <polygon points="859,664 874,664 1216,822 1212,837 1200,836 864,680" fill={DARK} />
      <polyline points="872,667 1214,825" stroke={LIGHT} strokeWidth="1" strokeDasharray="2 1" />
      <polyline points="872,671 1214,829" stroke="#376690" strokeWidth="0.800" strokeDasharray="3 1" />
      <polyline points="866,679 1205,834" stroke={LIGHT} strokeWidth="1.300" />
      <polygon points="1206,824 1403,673 1410,680 1218,837" fill={DARK} />
      <polygon points="1210,829 1405,677 1408,680 1217,833" fill={LIGHT} />
      <polyline points="1209,825 1404,675" stroke={LIGHT} strokeWidth="1" strokeDasharray="2 1" />
    </g>
    <Shaft o="865,380 882,382 894,529 880,531" l="870,386 880,386 891,528 885,528" />
    <Shaft o="943,380 959,380 967,530 953,532" l="950,382 956,382 963,530 957,530" />
    <polygon points="873,375 909,375 909,384 873,385" fill={DARK} />
    <polygon points="909,375 950,375 950,384 912,387" fill={LIGHT} />
    <path d="M870 375L900 373H922M915 374L953 375" stroke={DARK} strokeWidth="2" fill="none" />
    <Shaft o="901,378 918,378 932,537 917,538" l="906,384 915,384 925,536 917,536" />
    <polygon points="1016,366 1060,369 1060,381 1020,379" fill={LIGHT} />
    <path d="M1014 365h12l36 3M1051 382V371" stroke={DARK} strokeWidth="2" fill="none" />
    <Shaft o="1007,371 1026,372 1033,558 1016,558" l="1017,379 1025,379 1029,556 1020,556" />
    <Shaft o="1051,378 1058,374 1069,374 1072,550 1056,551" l="1058,380 1066,380 1069,549 1061,549" />
  </Svg>
);

/* ---------- taskbar glyphs ---------- */
const Chrome = () => (
  <Svg $w={36} viewBox="0 0 36 36">
    <circle cx="18" cy="18" r="18" fill="#fbc116" />
    <path d="M2.400 9l7.800 13.500L18 27l8-4.500L18 36A18 18 0 0 1 2.400 9z" fill="#2da94f" />
    <path d="M2.400 9A18 18 0 0 1 33.600 9H18a9 9 0 0 0-7.800 13.500z" fill="#e8453c" />
    <circle cx="18" cy="18" r="9" fill="#fff" /><circle cx="18" cy="18" r="7" fill="#2a7af0" />
  </Svg>
);

const flows: [string, string][] = [
  ["analytical", "Analytical Modeling"], ["physical", "Physical Modeling"], ["piping", "Piping"],
  ["post", "Postprocessing"], ["foundation", "Foundation Design"], ["steel", "Steel AutoDrafter"],
  ["chinese", "Chinese Steel Design"], ["connection", "Connection Design"],
  ["concrete", "Advanced Concrete D..."], ["advanced", "Advanced Slab Design"],
];

const viewTabs: [string, number, number][] = [
  ["Geometry", 78, 44], ["Properties", 82, 44], ["Materials", 74, 44], ["Specifications", 109, 45],
  ["Supports", 73, 44], ["Loading", 64, 45], ["Analysis", 64, 45], ["Design", 55, 0],
];

export default function App() {
  return (
    <Screen>
      <Global />
      <TitleBar>
        <TitleText $w={109}>AutoRecovery</TitleText>
        <Toggle>On</Toggle>
        <QuickAccess>
          <Slot $w={33}><Svg viewBox="0 0 24 24"><circle cx="12" cy="12" r="11.500" fill="#3f9b20" /><circle cx="12" cy="12" r="10" fill="#62bd35" /><path d="M4 12l8-7v4h7v6h-7v4z" fill="#fff" /></Svg></Slot>
          <Slot $w={36}><Svg viewBox="0 0 24 24"><circle cx="12" cy="12" r="11.500" fill="#7f5a1f" /><path d="M20 12l-8-7v4H5v6h7v4z" fill="#bb7668" /></Svg></Slot>
          <Slot $w={22}><Down $color="#fff" $size={9} $mt={7} /></Slot>
          <QuickDivider />
          <Slot $w={33}><Svg viewBox="0 0 24 24"><path d="M0 0h24v24H3l-3-3z" fill="#22252a" /><path d="M5 0h14v12H5z" fill="#dfe3e8" /><path d="M5 3h14M5 6h14M5 9h14" stroke="#a9b0b8" /><path d="M6 15h13v8H6z" fill="#d3d7dc" /><path d="M8 17h4v5H8z" fill="#22252a" /></Svg></Slot>
          <Slot $w={33}><Svg viewBox="0 0 24 24"><path d="M1 4h7l2 2h9v14H2z" fill="#e2a233" /><path d="M5 9h17l-4 12H1z" fill="#fde08a" /><path d="M12 3c3-3 6-2 7 1" stroke="#222" strokeWidth="1.500" fill="none" /></Svg></Slot>
          <Slot $w={33}><Svg viewBox="0 0 24 24"><path d="M0 7l2-3h7l2 2h12v14H0z" fill="#e0b24a" /><path d="M1 8h22v12H1z" fill="#f5d683" /></Svg></Slot>
          <Slot $w={35}><Svg viewBox="0 0 24 24"><path d="M1 10.500L11 2v5c8 1 13 7 11 14-2-4-5-6-11-6v4z" fill="#655a7c" stroke="#7d5060" /></Svg></Slot>
          <Slot $w={34}><Svg viewBox="0 0 24 24"><path d="M23 10.500L13 2v5C5 8 0 14 2 21c2-4 5-6 11-6v4z" fill="#655a7c" stroke="#7d5060" /></Svg></Slot>
          <Slot $w={30}><Svg viewBox="0 0 24 24"><path d="M3 6h12v2H3zM3 10h12l-6 8z" fill="#fff" /></Svg></Slot>
        </QuickAccess>
        <TitleText $w={560} $ls={0.05} $mt={10}>Duplex storey building.std - STAAD.Pro 2024 [Academic License]</TitleText>
        <WindowButtons>
          <Svg $w={18} $h={24} viewBox="0 0 18 24"><path d="M1 14.500h16" stroke="#fff" strokeWidth="3" /></Svg>
          <Svg $w={19} $h={24} viewBox="0 0 19 24"><path d="M5 2h14v13h-2V6H5zM0 9h14v13H0zM2 13.500h10V20H2z" fill="#fff" fillRule="evenodd" /></Svg>
          <Svg $w={18} $h={24} viewBox="0 0 18 24"><path d="M2 5l14 13M16 5L2 18" stroke="#fff" strokeWidth="3.400" /></Svg>
        </WindowButtons>
      </TitleBar>

      <MenuRow>
        <MenuTab $w={91} $drop={1} $pr={4}>File</MenuTab>
        <MenuTab $w={117}>Geometry</MenuTab>
        <MenuTab $w={77} $active>View</MenuTab>
        <MenuTab $w={87}>Select</MenuTab>
        <MenuTab $w={139}>Specification</MenuTab>
        <MenuTab $w={103}>Loading</MenuTab>
        <MenuTab $w={198}>Analysis and Design</MenuTab>
        <MenuTab $w={98}>Utilities</MenuTab>
        <MenuRight>
          <Svg $w={22} $h={28} viewBox="0 -3 22 28"><circle cx="11" cy="11" r="10" fill="#2b4fc0" stroke="#aab6e0" strokeWidth="1.600" /><path d="M7.500 8.500c0-5 7-4.500 7-.8 0 2.500-3 2.300-3.300 5" stroke="#fff" strokeWidth="2" fill="none" /><circle cx="11.200" cy="16" r="1.400" fill="#fff" /></Svg>
          <SearchBox>Search</SearchBox>
          <Svg $w={22} $h={26} viewBox="0 0 22 26"><path d="M11 4c4 0 5 3 5 6s-2 5-3 6c0 2 8 2 8 9H0c0-7 9-7 9-9-1-1-3-3-3-6s1-6 5-6z" fill="#00b7fa" /></Svg>
          <Slot $w={21}><Down $color="#555" $mt={11} $ml={13} /></Slot>
        </MenuRight>
      </MenuRow>

      <Ribbon>
        <Group $w={234}>
          <GroupBody>
            <BigButton $w={86} $off $pl={2}>
              <Svg $w={48} viewBox="0 0 48 48" fill="none"><path d="M4 5h40q3 0 3 3v22L35 42H4q-3 0-3-3V8q0-3 3-3z" fill="#a9dcf6" stroke="#7fc0e6" strokeWidth="1.500" /><path d="M7 10h34v17l-8 9H7z" fill="#eef8fd" stroke="#8ccbee" strokeWidth="2" /><path d="M9 20h30M9 28h26" stroke="#b5b9bc" strokeWidth="1.600" /><path d="M34 42c3-4 3-9 2-11 4 1 8 0 10-1z" fill="#e4f4fc" stroke="#8ccbee" strokeWidth="1.500" /></Svg>
              <span>Label</span><span>Settings</span>
            </BigButton>
            <IconGrid $cols={2} $rows="33px 33px" $pt={6}>
              <IconCell><LabelIcon kind="node" /></IconCell><IconCell><LabelIcon kind="beam" /></IconCell>
              <IconCell $on><LabelIcon kind="plate" /></IconCell><IconCell><LabelIcon kind="solid" /></IconCell>
            </IconGrid>
            <InnerLine $h={66} $ml={2} $mr={6} />
            <IconGrid $cols={2} $rows="33px 33px" $pt={6}>
              <IconCell><Pointer kind="node" /></IconCell><IconCell><Pointer kind="beam" /></IconCell>
              <IconCell><Pointer kind="plate" /></IconCell><IconCell><Pointer kind="solid" /></IconCell>
            </IconGrid>
          </GroupBody>
          <GroupName>Labels</GroupName>
        </Group>

        <Group $w={557}>
          <GroupBody>
            <BigButton $w={86}>
              <Svg $w={48} viewBox="0 0 48 48" fill="none"><path d="M26 1.500h20.500v45H1.500V26" stroke="#1c1c1c" strokeWidth="3" strokeDasharray="3 3" /><path d="M26 27l14 13" stroke="#f08c1c" strokeWidth="7" /><path d="M23 24l5 5" stroke="#b5c0c8" strokeWidth="3" /><circle cx="15" cy="15" r="13.500" fill="#cfeafb" stroke={NAVY} strokeWidth="3.400" /></Svg>
              <span>Zoom</span><span>Window</span>
            </BigButton>
            <BigButton $w={126} $off>
              <Svg $w={48} viewBox="0 0 48 48" fill="none"><path d="M1 1h46v46H1z" fill="#fbfbfb" stroke="#7bbfea" strokeWidth="2" /><path d="M0 9h48" stroke="#7bbfea" strokeWidth="18" /><path d="M12 27h24M24 15v24" stroke="#7bbfea" strokeWidth="3" /><path d="M2 18h44v28H2z" fill="#fbfbfb" /><path d="M12 31h24M24 20v21" stroke="#7bbfea" strokeWidth="2.600" /><path d="M24 17l4 5h-8zM24 44l4-5h-8zM9 31l5-4v8zM39 31l-5-4v8z" fill="#7bbfea" /></Svg>
              <span>Display</span><span>Whole Structure</span>
            </BigButton>
            <IconGrid $cols={3} $rows="33px 34px 33px" $pt={10} $ml={6}>
              <IconCell><Magnifier sign="plus" /></IconCell><IconCell><Magnifier sign="move" /></IconCell><IconCell><Win kind="zoomwin" /></IconCell>
              <IconCell><Magnifier sign="minus" /></IconCell><IconCell><Magnifier sign="cross" dim /></IconCell><IconCell><Win kind="frames" /></IconCell>
              <IconCell><Hand /></IconCell><IconCell><Magnifier sign="left" dim /></IconCell>
            </IconGrid>
            <InnerLine $h={108} $ml={6} $mr={5} />
            <IconGrid $cols={3} $rows="33px 37px 33px" $pt={9}>
              {cubeFaces.map((_, i) => <IconCell key={i}><Cube index={i} /></IconCell>)}
            </IconGrid>
            <InnerLine $h={107} $ml={6} $mr={4} />
            <IconGrid $cols={3} $rows="33px 33px 33px" $pt={6} $cell={37.5}>
              <IconCell><Spin kind={0} /></IconCell><IconCell><Spin kind={1} /></IconCell><IconCell><Win kind="pick" /></IconCell>
              <IconCell><Spin kind={2} /></IconCell><IconCell><Spin kind={3} /></IconCell><IconCell><Win kind="angle" /></IconCell>
              <IconCell><Spin kind={4} /></IconCell><IconCell><Spin kind={5} /></IconCell><IconCell><Win kind="pan" /></IconCell>
            </IconGrid>
          </GroupBody>
          <GroupName>Tools</GroupName>
        </Group>

        <Group $w={324}>
          <GroupBody>
            <CommandList $w={184} $pl={10}>
              <Command><Win kind="open" />Open View</Command>
              <Command $off><Win kind="new" />New View</Command>
              <Command $off><Win kind="selected" />Selected Objects</Command>
            </CommandList>
            <BigButton $w={132}>
              <Svg $w={48} viewBox="0 0 48 48" fill="none"><path d="M1 1h46v35H1z" fill="#fff" stroke={BLUE} strokeWidth="2" /><path d="M0 4.500h48" stroke={BLUE} strokeWidth="9" /><path d="M36 23l3 4 6-1-1 6 4 3-4 4 1 6-6-1-3 4-4-4-6 1 1-6-4-4 4-3-1-6 6 1z" fill="#b4bbc1" stroke="#8a939b" strokeWidth="1.200" /><circle cx="36" cy="35" r="5" fill="#fff" stroke="#8a939b" strokeWidth="1.500" /><path d="M33 35h6" stroke={BLUE} strokeWidth="1.600" /></Svg>
              <span>View</span><WithArrow>Management<Down $mt={11} /></WithArrow>
            </BigButton>
          </GroupBody>
          <GroupName>Views</GroupName>
        </Group>

        <Group $w={258}>
          <GroupBody>
            <CommandList $w={250} $pl={9}>
              <Command><Win kind="display" />Display Options</Command>
              <Command><Win kind="colors" />Set Structure Colors</Command>
              <Command><Win kind="tooltip" />Structural Tooltip Options</Command>
            </CommandList>
          </GroupBody>
          <GroupName>Options</GroupName>
        </Group>

        <Group $w={424}>
          <GroupBody>
            <CommandList $w={161} $pl={9}>
              <Command><Win kind="cascade" />Cascade</Command>
              <Command><Win kind="horiz" />Tile Horizontal</Command>
              <Command><Win kind="vert" />Tile Vertical</Command>
            </CommandList>
            <CommandList $w={161} $pl={9}>
              <Command><Win kind="structure" />Structure Only</Command>
              <Command><Win kind="tables" />Tables</Command>
              <Command $bare>Windows<Down /></Command>
            </CommandList>
            <BigButton $w={96} $off>
              <Svg $w={48} viewBox="0 0 48 48" fill="none" stroke="#7fc3ee" strokeWidth="3" strokeLinejoin="round"><path d="M2 9L27 2l19 12v22L20 46 2 31z" fill="#e6f4fc" /><path d="M2 9l18 13 26-8M20 22v24" /></Svg>
              <span>3D</span><span>Rendering</span>
            </BigButton>
          </GroupBody>
          <GroupName>Windows</GroupName>
        </Group>
        <Collapse><Svg $w={15} $h={9} viewBox="0 0 15 9"><path d="M1 8l6.500-6.500L14 8" stroke="#444" strokeWidth="2.200" fill="none" /></Svg></Collapse>
      </Ribbon>

      <Workspace>
        <Panel>
          <PanelHead>
            Workflow
            <Svg $w={15} $h={20} viewBox="0 0 15 20"><path d="M2 1h11v2h-1v6l3 2v1H0v-1l3-2V3H2zM6 12h3v8H6z" fill="#fff" /><path d="M6 3h2v6H6z" fill="#999" /></Svg>
          </PanelHead>
          <PanelBody>
            <FlowList>
              {flows.map(([k, t], i) => <FlowItem key={k} $on={i === 0}><FlowIcon kind={k} /><FlowName>{t}</FlowName></FlowItem>)}
            </FlowList>
            <Scroll>
              <ScrollEnd><Svg $w={9} $h={8} viewBox="0 0 9 8"><path d="M0 8l4.500-8L9 8z" fill="#444" /></Svg></ScrollEnd>
              <Thumb />
              <ScrollEnd $last><Svg $w={9} $h={8} viewBox="0 0 9 8"><path d="M0 0l4.500 8L9 0z" fill="#444" /></Svg></ScrollEnd>
            </Scroll>
          </PanelBody>
        </Panel>
        <View>
          <ViewTabs>
            <Slot $w={24}><Svg $h={30} viewBox="0 -3 24 30"><g transform="scale(.66)" fill="none"><Frame /><path d="M28 30l7 7" stroke="#f08c1c" strokeWidth="3.600" /><circle cx="24" cy="25" r="6" fill="#d8eefb" stroke={NAVY} strokeWidth="2" /></g></Svg></Slot>
            <ViewTitle>Analytical Modeling:</ViewTitle>
            {viewTabs.map(([t, w, g], i) => <ViewTab key={t} $w={w} $gap={g} $on={i === 0} $line={i === 0 || i === 7}>{t}</ViewTab>)}
            <LayoutIcon><Win kind="layout" /></LayoutIcon>
          </ViewTabs>
          <Stage><Model /></Stage>
        </View>
      </Workspace>

      <Status>
        <StatusHelp>For Help, press F1</StatusHelp>
        <StatusLine /><StatusText $w={267}>Analytical Modeling Workflow</StatusText>
        <StatusLine /><StatusText $w={266}>Load : 1: DEAD LOAD</StatusText>
        <StatusLine /><StatusText $w={266}>Input Units : kN-m</StatusText>
      </Status>

      <Taskbar>
        <Weather>
          <Svg $w={42} $h={48} viewBox="27 1020 42 48">
            <defs><linearGradient id="cloud" x1="0" y1="0" x2="0" y2="1"><stop stopColor="#dfe9fb" /><stop offset="1" stopColor="#7ba3ea" /></linearGradient></defs>
            <path d="M44 1025c1 9-6 15-15 14 3 7 12 9 18 5 7-5 5-16-3-19z" fill="#f5a524" />
            <path d="M37 1060a8 8 0 0 1-1-15 11 11 0 0 1 20-3 9 9 0 0 1 1 18z" fill="url(#cloud)" />
            <circle cx="57" cy="1030" r="12" fill="#ff99a4" />
            <text x="47.500" y="1035.500" fontSize="15" fill="#1b1b1b">9+</text>
          </Svg>
          <WeatherText><b>33°C</b>Mostly cloudy</WeatherText>
        </Weather>
        <Apps>
          <TaskApp><Svg viewBox="0 0 36 36"><defs><linearGradient id="win" x1="0" y1="0" x2="1" y2="1"><stop stopColor="#85defb" /><stop offset="1" stopColor="#0a94ee" /></linearGradient></defs><path d="M2 0h15v17H0V2q0-2 2-2zM19 0h15q2 0 2 2v15H19zM0 19h17v17H2q-2 0-2-2zM19 19h17v15q0 2-2 2H19z" fill="url(#win)" /></Svg></TaskApp>
          <TaskApp><Svg viewBox="0 0 36 36" fill="none"><path d="M24 24l9 10" stroke="#d5d9db" strokeWidth="4" /><circle cx="16" cy="15" r="12.500" fill="#3f5259" stroke="#e8eaeb" strokeWidth="3.400" /></Svg></TaskApp>
          <TaskApp><Svg viewBox="0 0 36 36"><rect x="0" y="10" width="27" height="25" rx="2" fill="#6b6b6b" /><rect x="9" y="0" width="27" height="25" rx="2" fill="#efefef" /><path d="M9 10h18v15H11q-2 0-2-2z" fill="#b3b3b3" /></Svg></TaskApp>
          <TaskApp><Svg viewBox="0 0 36 36"><path d="M0 4q0-3 3-3h9l4 4H34q2 0 2 2v28H0z" fill="#e8a50c" /><path d="M0 6h14l3-2h17q2 0 2 2v29H0z" fill="#fdc93f" /><path d="M6 35V26q0-3 3-3h18q3 0 3 3v9z" fill="#1478cc" /><path d="M11 29h14" stroke="#0a4f8f" strokeWidth="1.800" /></Svg><Dot /></TaskApp>
          <TaskApp><Svg viewBox="0 0 36 36"><path d="M10 7V1h16v6" fill="none" stroke="#3fa9e4" strokeWidth="2.200" /><path d="M0 5h36v28q0 3-3 3H3q-3 0-3-3z" fill="#f1f1f1" /><path d="M10 13h7.500v7.500H10z" fill="#f04e24" /><path d="M18.500 13H26v7.500h-7.500z" fill="#7eb900" /><path d="M10 21.500h7.500V29H10z" fill="#00a2ed" /><path d="M18.500 21.500H26V29h-7.500z" fill="#fdb800" /></Svg></TaskApp>
          <TaskApp><White><FcGoogle /></White></TaskApp>
          <TaskApp><FaWhatsapp color="#25d366" /><Badge>25</Badge></TaskApp>
          <TaskApp><Svg viewBox="0 0 36 36"><rect y="5.500" width="36" height="25" rx="5" fill="#f00" /><path d="M14.500 12.500v11l9-5.500z" fill="#fff" /></Svg></TaskApp>
          <TaskApp><Chrome /></TaskApp>
          <TaskApp><Chrome /><Avatar><Svg viewBox="0 0 24 24"><circle cx="12" cy="12" r="12" fill="#dcae6c" /><circle cx="12" cy="11" r="9.500" fill="#f0dcb8" /><path d="M4 4c1 5 3 6 6 7l2 1 2-1c3-1 5-2 6-7 2 6-1 10-5 12v4H9v-4C5 14 2 10 4 4z" fill="#27304f" /><circle cx="12" cy="7" r="2.600" fill="#4a5fa8" /></Svg></Avatar><Dot /></TaskApp>
          <TaskApp $on><Svg viewBox="0 0 36 36"><defs><linearGradient id="staad" x1="0" y1="0" x2="1" y2="1"><stop stopColor="#ef1c24" /><stop offset="1" stopColor="#8a0a10" /></linearGradient></defs><rect width="36" height="36" rx="3" fill="url(#staad)" /><Tower color="#fff" /></Svg><Dot $on /></TaskApp>
          <TaskApp><RiOpenaiFill color="#fff" /><Dot /></TaskApp>
        </Apps>
        <Tray>
          <Svg $w={18} $h={68} viewBox="0 0 18 68"><path d="M1.500 37.500L9 30l7.500 7.500" stroke="#fff" strokeWidth="2.200" fill="none" /></Svg>
          <TrayText $w={93} $pt={12} $lh={23}>ENG<br />IN</TrayText>
          <TrayIcons>
            <Svg viewBox="0 0 24 24" fill="none" stroke="#fff" strokeWidth="1.900"><path d="M1 9.500a15.500 15.500 0 0 1 22 0M4.500 13a10.600 10.600 0 0 1 15 0M8 16.300a5.600 5.600 0 0 1 8 0" /><circle cx="12" cy="18.500" r="1.600" fill="#fff" /></Svg>
            <Svg viewBox="0 0 24 24" fill="none" stroke="#fff" strokeWidth="1.700"><path d="M1 9h4l5-5v16l-5-5H1z" strokeLinejoin="round" /><path d="M13 8.500q2.500 3.500 0 7" /><path d="M16.500 5.500q5 6.500 0 13M19.500 3q7 9 0 18" stroke="#5b6b72" /></Svg>
            <Svg viewBox="0 0 24 24" fill="none" stroke="#fff" strokeWidth="1.800"><rect x="1" y="5" width="19.500" height="14" rx="3" /><rect x="4" y="8" width="10" height="8" fill="#fff" stroke="none" /><path d="M22.500 9.500v5" strokeWidth="2.400" /></Svg>
          </TrayIcons>
          <TrayText $w={106} $pt={9} $lh={24} $right>21:01<br />20-06-2025</TrayText>
        </Tray>
      </Taskbar>
    </Screen>
  );
}
